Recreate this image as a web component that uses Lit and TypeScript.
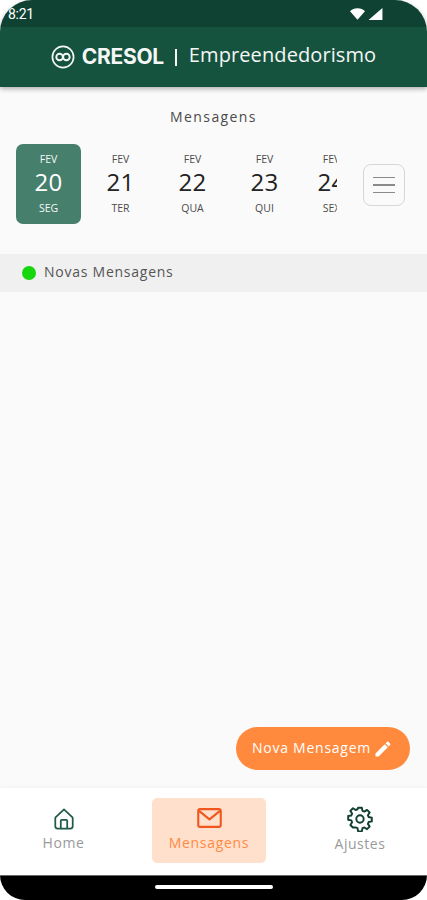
import { LitElement, html, css, svg } from 'lit';
import { customElement } from 'lit/decorators.js';

const days = [
  { month: 'FEV', day: '20', week: 'SEG', active: true },
  { month: 'FEV', day: '21', week: 'TER' },
  { month: 'FEV', day: '22', week: 'QUA' },
  { month: 'FEV', day: '23', week: 'QUI' },
  { month: 'FEV', day: '24', week: 'SEX' },
];

const logo = svg`<svg width="24" height="24" viewBox="0 0 24 24" fill="none" stroke="#f4f7f5">
  <circle cx="12" cy="12" r="10.6" stroke-width="1.7"/>
  <circle cx="8.6" cy="12" r="3.3" stroke-width="1.9"/>
  <circle cx="15.4" cy="12" r="3.3" stroke-width="1.9"/>
</svg>`;

@customElement('app-root')
export class AppRoot extends LitElement {
  static override styles = css`
    :host {
      display: block;
      width: 427px;
      height: 900px;
      background: #fff;
      font-family: 'Open Sans', 'Noto Sans', sans-serif;
      overflow: hidden;
    }
    .screen {
      position: relative;
      height: 900px;
      display: flex;
      flex-direction: column;
    }
    .top {
      border-radius: 32px 32px 0 0;
      overflow: hidden;
      box-shadow: 0 2px 5px rgba(0, 0, 0, 0.3);
      position: relative;
      z-index: 1;
    }
    .status {
      height: 27px;
      background: #0f4233;
      display: flex;
      align-items: center;
      justify-content: space-between;
      padding: 0 44px 0 8px;
      color: #fff;
      font: 14px 'Roboto', sans-serif;
      letter-spacing: -0.3px;
    }
    .status-icons { display: flex; gap: 3px; align-items: center; }
    .header {
      height: 60px;
      background: #16533f;
      display: flex;
      align-items: center;
      justify-content: center;
      color: #f4f7f5;
      padding-bottom: 1px;
      box-sizing: border-box;
    }
    .brand {
      font: 700 21px 'Inter', sans-serif;
      letter-spacing: -0.3px;
      margin-left: 7px;
    }
    .sep {
      width: 2px;
      height: 17px;
      background: #f4f7f5;
      margin: 2px 12px 0 11px;
    }
    .app-name {
      font-size: 20px;
      letter-spacing: 0.1px;
      margin-top: -5px;
    }
    .content {
      flex: 1;
      background: #fafafa;
      display: flex;
      flex-direction: column;
    }
    .title {
      text-align: center;
      font-size: 14px;
      letter-spacing: 1.4px;
      color: #4a4a4a;
      margin-top: 20px;
      line-height: 20px;
    }
    .strip {
      display: flex;
      align-items: flex-start;
      margin-top: 17px;
      padding-left: 16px;
    }
    .days {
      display: flex;
      width: 321px;
      overflow: hidden;
      flex-shrink: 0;
    }
    .day {
      flex: 0 0 65px;
      height: 80px;
      margin-right: 7px;
      border-radius: 7px;
      display: flex;
      flex-direction: column;
      align-items: center;
      color: #4b4b4b;
      box-sizing: border-box;
      padding-top: 8px;
    }
    .day:last-child { margin-left: -5px; }
    .day.active {
      background: #46806d;
      color: #f6f8f7;
    }
    .month, .week { font-size: 10.5px; line-height: 14px; }
    .num {
      font-size: 24px;
      line-height: 30px;
      color: #222;
      margin: 1px 0 4px;
      letter-spacing: 0.4px;
    }
    .active .num { color: #fff; }
    .menu {
      width: 42px;
      height: 42px;
      box-sizing: border-box;
      margin: 20px 0 0 26px;
      border: 1.5px solid #d6d6d6;
      border-radius: 8px;
      display: flex;
      flex-direction: column;
      align-items: center;
      justify-content: center;
      gap: 6px;
      flex-shrink: 0;
    }
    .menu span { width: 22px; height: 1.5px; background: #8a8a8a; display: block; }
    .new-row {
      margin-top: 30px;
      height: 38px;
      background: #f0f0f0;
      display: flex;
      align-items: center;
      gap: 8px;
      padding-left: 22px;
      color: #555;
      font-size: 14px;
      letter-spacing: 0.75px;
    }
    .new-row .text { margin-top: -4px; }
    .dot { width: 14px; height: 14px; border-radius: 50%; background: #16d60e; }
    .fab {
      position: absolute;
      left: 236px;
      top: 727px;
      width: 174px;
      height: 43px;
      border-radius: 22px;
      background: #ff8a3d;
      color: #fff;
      display: flex;
      align-items: center;
      padding-left: 16px;
      box-sizing: border-box;
      gap: 2px;
      font-size: 14px;
      letter-spacing: 0.75px;
    }
    .fab .text { margin-top: -2px; }
    .nav {
      height: 87px;
      background: #fff;
      display: flex;
      box-sizing: border-box;
      padding-top: 10px;
      box-shadow: 0 -1px 3px rgba(0, 0, 0, 0.04);
    }
    .tab {
      display: flex;
      flex-direction: column;
      align-items: center;
      color: #9a9a9a;
      font-size: 14px;
      letter-spacing: 0.55px;
      height: 65px;
      box-sizing: border-box;
      padding-top: 8px;
    }
    .tab svg { display: block; }
    .tab.home { width: 125px; margin-left: 1px; padding-top: 10px; }
    .tab.home .label { margin-top: 3px; }
    .tab.msg {
      width: 114px;
      margin-left: 26px;
      background: #fee0cc;
      border-radius: 5px;
      color: #ff8a45;
      padding-top: 10px;
      letter-spacing: 0.7px;
    }
    .tab.msg .label { margin-top: 5px; }
    .tab.cfg { width: 114px; margin-left: 37px; padding-top: 8px; }
    .tab.cfg .label { margin-top: 2px; }
    .label { line-height: 20px; }
    .gesture {
      height: 25px;
      background: #000;
      border-top: 1px solid #666;
      box-sizing: border-box;
      border-radius: 0 0 32px 32px;
      display: flex;
      justify-content: center;
      padding-top: 9px;
    }
    .gesture span { width: 118px; height: 4px; border-radius: 2px; background: #fff; display: block; }
  `;

  override render() {
    return html`
      <div class="screen">
        <div class="top">
          <div class="status">
            <span>8:21</span>
            <span class="status-icons">
              <svg width="15" height="12" viewBox="0 0 17 13"><path d="M0 3.500C2 1.400 5 0 8.500 0S15 1.400 17 3.500L8.500 13Z" fill="#fff"/></svg>
              <svg width="15" height="12" viewBox="0 0 15 13"><path d="M15 0V13H0Z" fill="#fff"/></svg>
            </span>
          </div>
          <div class="header">
            ${logo}
            <span class="brand">CRESOL</span>
            <span class="sep"></span>
            <span class="app-name">Empreendedorismo</span>
          </div>
        </div>
        <div class="content">
          <div class="title">Mensagens</div>
          <div class="strip">
            <div class="days">
              ${days.map(
                (d) => html`
                  <div class="day ${d.active ? 'active' : ''}">
                    <span class="month">${d.month}</span>
                    <span class="num">${d.day}</span>
                    <span class="week">${d.week}</span>
                  </div>
                `
              )}
            </div>
            <div class="menu"><span></span><span></span><span></span></div>
          </div>
          <div class="new-row"><span class="dot"></span><span class="text">Novas Mensagens</span></div>
        </div>
        <div class="fab">
          <span class="text">Nova Mensagem</span>
          <svg width="20" height="20" viewBox="0 0 24 24"><path fill="#fff" d="M3 17.250V21h3.750L17.810 9.940l-3.750-3.750L3 17.250zM20.710 7.040a1 1 0 0 0 0-1.410l-2.340-2.340a1 1 0 0 0-1.410 0l-1.830 1.830 3.750 3.750 1.830-1.830z"/></svg>
        </div>
        <div class="nav">
          <div class="tab home">
            <svg width="22" height="22" viewBox="0 0 24 24" fill="none" stroke="#1f5b49" stroke-width="1.9" stroke-linejoin="round">
              <path d="M2.500 10.500 12 1.500l9.500 9V20a2.500 2.500 0 0 1-2.500 2.500H5A2.500 2.500 0 0 1 2.500 20Z"/>
              <path d="M8.500 22.500V14a1 1 0 0 1 1-1h5a1 1 0 0 1 1 1v8.500"/>
            </svg>
            <span class="label">Home</span>
          </div>
          <div class="tab msg">
            <svg width="25" height="20" viewBox="0 0 26 21" fill="none" stroke="#f0561d" stroke-width="2.200" stroke-linejoin="round">
              <rect x="1.200" y="1.200" width="23.600" height="18.600" rx="2"/>
              <path d="M2 3l11 9L24 3"/>
            </svg>
            <span class="label">Mensagens</span>
          </div>
          <div class="tab cfg">
            <svg width="26" height="26" viewBox="0 0 24 24" fill="none" stroke="#123f31" stroke-width="1.800" stroke-linejoin="round">
              <circle cx="12" cy="12" r="3.400"/>
              <path d="M10.300 2h3.400l.6 2.900 1.700.7 2.500-1.600 2.400 2.400-1.600 2.500.7 1.700 2.900.6v3.400l-2.900.6-.7 1.700 1.600 2.500-2.400 2.400-2.500-1.600-1.700.7-.6 2.900h-3.400l-.6-2.900-1.700-.7L5.500 20.300 3.100 17.900l1.600-2.500-.7-1.700L1.100 13.100V9.700L4 9.100l.7-1.700L3.100 4.900 5.500 2.500 8 4.100l1.700-.7Z" transform="translate(0 -.4)"/>
            </svg>
            <span class="label">Ajustes</span>
          </div>
        </div>
        <div class="gesture"><span></span></div>
      </div>
    `;
  }
}
